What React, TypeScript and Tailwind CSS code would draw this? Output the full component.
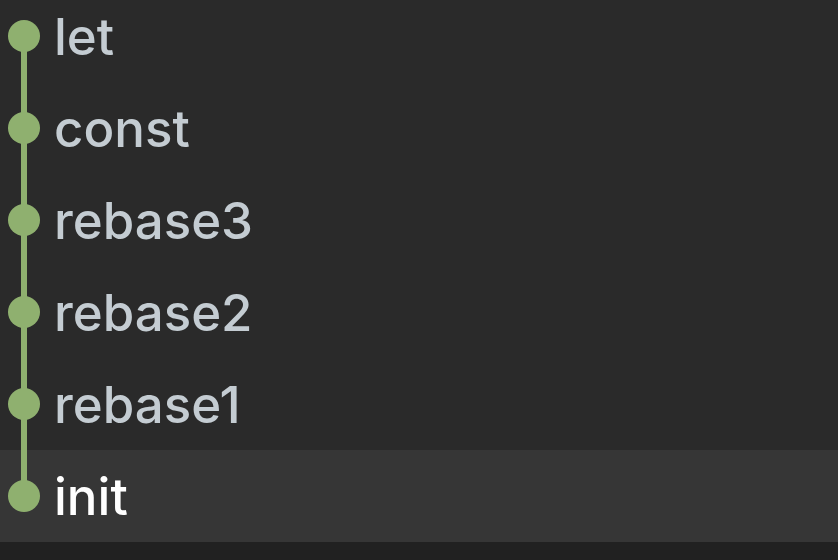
import React from "react";

const commits = ["let", "const", "rebase3", "rebase2", "rebase1", "init"];

const GraphCell = ({ first, last }: { first: boolean; last: boolean }) => (
  <svg width="48" height="92" viewBox="0 0 48 92" className="shrink-0">
    <line
      x1="24"
      x2="24"
      y1={first ? 46 : 0}
      y2={last ? 46 : 92}
      stroke="#8fb06f"
      strokeWidth="6"
    />
    <circle cx="24" cy="46" r="16" fill="#8fb06f" />
  </svg>
);

const App = () => {
  return (
    <div className="flex h-[560px] w-[838px] flex-col overflow-hidden bg-[#2a2a2a] font-['Inter',sans-serif]">
      <div className="-mt-[10px] flex flex-col">
        {commits.map((name, i) => {
          const selected = i === commits.length - 1;
          return (
            <div
              key={name}
              className={
                selected
                  ? "flex h-[92px] items-center bg-[#363636] text-white"
                  : "flex h-[92px] items-center text-[#c4ccd2]"
              }
            >
              <GraphCell first={i === 0} last={selected} />
              <span className="ml-[6px] text-[51px] font-medium leading-none">{name}</span>
            </div>
          );
        })}
      </div>
      <div className="flex-1 bg-[#212121]" />
    </div>
  );
};

export default App;
